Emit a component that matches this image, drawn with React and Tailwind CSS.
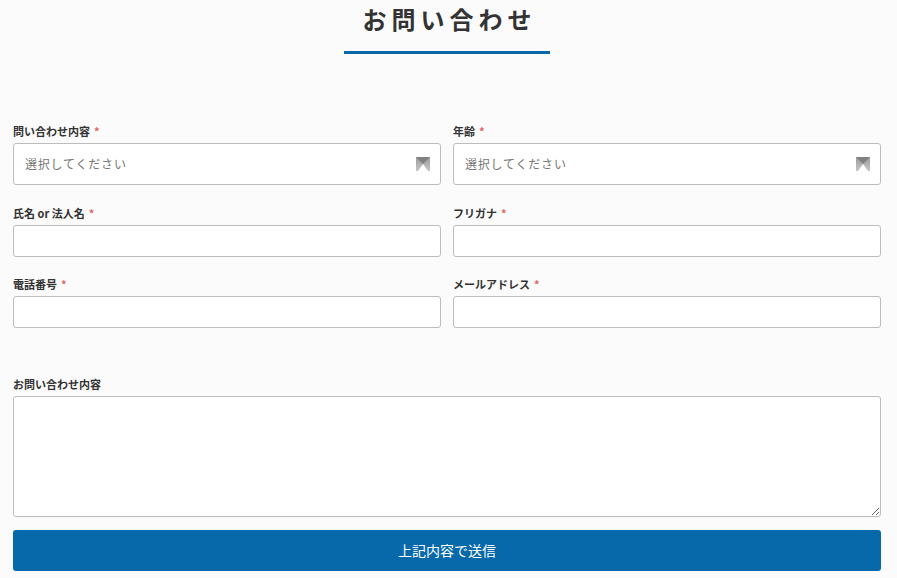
const font = { fontFamily: '"Noto Sans CJK JP", "Noto Sans", sans-serif' };

const SelectArrow = () => (
  <svg width="14" height="14" viewBox="0 0 14 14" className="shrink-0">
    <defs>
      <linearGradient id="side" x1="0" y1="0" x2="0" y2="1">
        <stop offset="0" stopColor="#9a9a9a" />
        <stop offset="1" stopColor="#c8c8c8" />
      </linearGradient>
    </defs>
    <rect width="14" height="14" fill="url(#side)" />
    <polygon points="0,0 14,0 7,7" fill="#808080" />
    <polygon points="2,14 12,14 7,7" fill="#ffffff" />
  </svg>
);

const Label = ({ children, required }) => (
  <label className="mb-[5px] block text-[11px] font-bold leading-[14px] text-[#333]">
    {children}
    {required && <span className="ml-[4px] text-[#d66]">*</span>}
  </label>
);

const Select = () => (
  <div className="flex h-[42px] items-center justify-between rounded-[3px] border border-[#bdbdbd] bg-white pl-[11px] pr-[10px]">
    <span className="text-[12px] tracking-[0.8px] text-[#777]">選択してください</span>
    <SelectArrow />
  </div>
);

const Input = () => (
  <input type="text" className="block h-[32px] w-full rounded-[3px] border border-[#bdbdbd] bg-white outline-none" />
);

export default function App() {
  return (
    <div className="min-h-[578px] bg-[#fbfbfb] pl-[13px] pr-[16px]" style={font}>
      <div className="flex flex-col items-center pt-[4px]">
        <h1 className="pl-[5px] text-[24px] font-bold leading-[30px] tracking-[5px] text-[#333]">お問い合わせ</h1>
        <div className="mt-[17px] h-[3px] w-[206px] bg-[#0769aa]" />
      </div>

      <div className="mt-[70px] grid grid-cols-2 gap-x-[12px]">
        <div>
          <Label required>問い合わせ内容</Label>
          <Select />
        </div>
        <div>
          <Label required>年齢</Label>
          <Select />
        </div>
        <div className="mt-[21px]">
          <Label required>氏名 or 法人名</Label>
          <Input />
        </div>
        <div className="mt-[21px]">
          <Label required>フリガナ</Label>
          <Input />
        </div>
        <div className="mt-[20px]">
          <Label required>電話番号</Label>
          <Input />
        </div>
        <div className="mt-[20px]">
          <Label required>メールアドレス</Label>
          <Input />
        </div>
      </div>

      <div className="mt-[49px]">
        <Label>お問い合わせ内容</Label>
        <textarea className="block h-[121px] w-full rounded-[3px] border border-[#bdbdbd] bg-white outline-none" />
      </div>

      <button className="mt-[13px] flex h-[41px] w-full items-center justify-center rounded-[3px] bg-[#0769aa] text-[14px] text-white">
        上記内容で送信
      </button>
    </div>
  );
}
